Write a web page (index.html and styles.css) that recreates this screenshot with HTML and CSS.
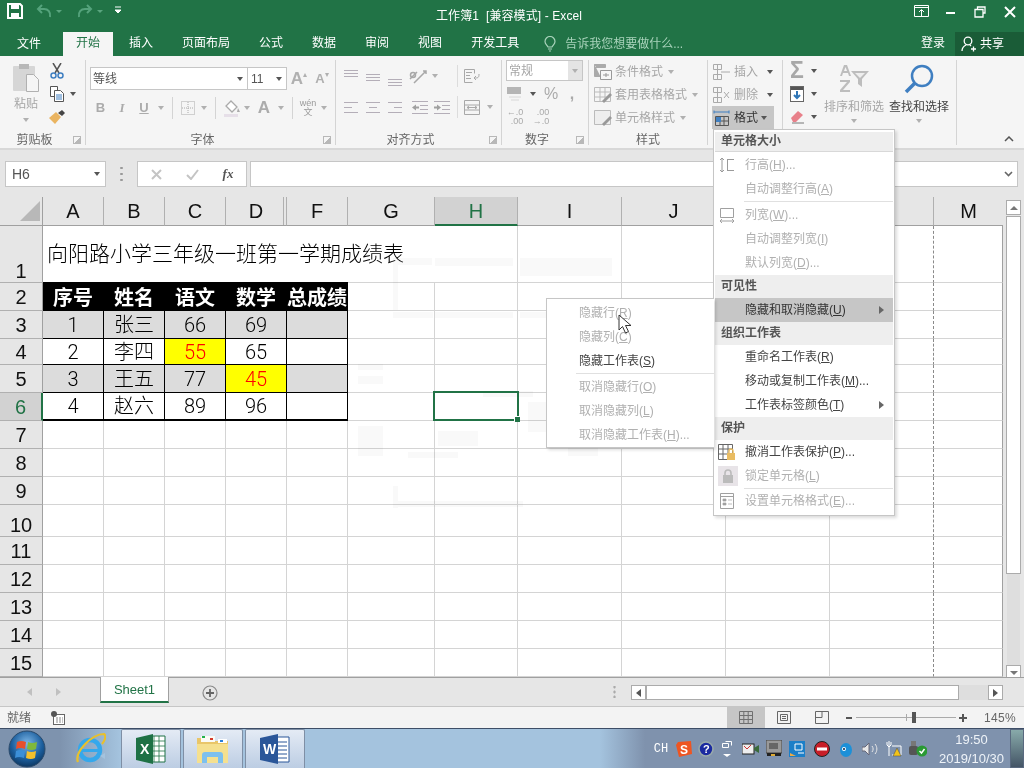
FILE: index.html
```html
<!DOCTYPE html>
<html lang="zh-CN">
<head>
<meta charset="utf-8">
<title>工作簿1 [兼容模式] - Excel</title>
<link rel="stylesheet" href="styles.css">
</head>
<body>
<div class="app">
  <header class="titlebar">
    <div class="qat">
      <svg class="q-save" width="16" height="16" viewBox="0 0 16 16"><path d="M1 1h12l2 2v12H1z" fill="none" stroke="#fff" stroke-width="2"/><rect x="4" y="1" width="8" height="5" fill="#fff"/><rect x="4" y="10" width="8" height="5" fill="#fff"/></svg>
      <svg class="q-undo" width="16" height="16" viewBox="0 0 16 16"><path d="M14 14c1-5-2-8-6-8H3M6 2 2 6l4 4" fill="none" stroke="#55a37c" stroke-width="2"/></svg><i class="caret-w dim"></i>
      <svg class="q-redo" width="16" height="16" viewBox="0 0 16 16"><path d="M2 14c-1-5 2-8 6-8h5M10 2l4 4-4 4" fill="none" stroke="#55a37c" stroke-width="2"/></svg><i class="caret-w dim"></i>
      <svg class="q-more" width="8" height="8" viewBox="0 0 8 8"><path d="M1 1h6M1 4h6l-3 3z" fill="#fff" stroke="#fff"/></svg>
    </div>
    <div class="doc-title">工作簿1&nbsp; [兼容模式] - Excel</div>
    <div class="winctl">
      <svg width="16" height="14" viewBox="0 0 16 14"><path d="M.5.5h14v11H.5zM.5 2.500h14" fill="none" stroke="#fff"/><path d="M7.500 11V5M5 7l2.500-2.500L10 7" fill="none" stroke="#fff"/></svg>
      <svg width="12" height="12" viewBox="0 0 12 12"><rect x="1" y="6" width="9" height="2" fill="#fff"/></svg>
      <svg width="12" height="12" viewBox="0 0 12 12"><path d="M3.500 3V1h7.500v6H9M1 3.500h8v7.500H1z" fill="none" stroke="#fff" stroke-width="1.300"/></svg>
      <svg width="12" height="12" viewBox="0 0 12 12"><path d="M1 1l10 10M11 1 1 11" stroke="#fff" stroke-width="2"/></svg>
    </div>
  </header>

  <nav class="tabs">
    <span class="tab first">文件</span>
    <span class="tab on">开始</span>
    <span class="tab">插入</span>
    <span class="tab">页面布局</span>
    <span class="tab">公式</span>
    <span class="tab">数据</span>
    <span class="tab">审阅</span>
    <span class="tab">视图</span>
    <span class="tab">开发工具</span>
    <span class="tell">
      <svg width="12" height="16" viewBox="0 0 12 16"><path d="M4 11C3 9 1 8 1 5.500a5 5 0 0 1 10 0C11 8 9 9 8 11zM4 13h4M5 15h2" fill="none" stroke="#a9d3bb" stroke-width="1.200"/></svg>
      告诉我您想要做什么...
    </span>
    <span class="login">登录</span>
    <span class="share">
      <svg width="16" height="16" viewBox="0 0 16 16"><circle cx="7" cy="5" r="3.800" fill="none" stroke="#fff" stroke-width="1.300"/><path d="M1 15c0-3 2-5 4-6M9 9l1 1M10 13h5M12.500 10.500v5" fill="none" stroke="#fff" stroke-width="1.300"/></svg>
      共享
    </span>
  </nav>

  <section class="ribbon">
    <div class="group g1">
      <div class="gbody">
        <div class="bigbtn paste">
          <svg width="28" height="30" viewBox="0 0 28 30"><rect x="1" y="3" width="22" height="25" rx="1" fill="#d6d6d6"/><rect x="7" y="1" width="10" height="5" fill="#b8b8b8"/><path d="M14.500 11.500h7l5 5v12h-12z" fill="#f5f5f5" stroke="#b0b0b0"/></svg>
          <span class="lbl dis">粘贴</span>
          <i class="caret sm"></i>
        </div>
        <div class="tools">
          <svg class="t-ic" width="16" height="16" viewBox="0 0 16 16"><path d="M4 0l6 10M12 0 6 10" stroke="#555" stroke-width="1.500"/><circle cx="4.500" cy="12.500" r="2.500" fill="none" stroke="#3f7fc1" stroke-width="1.500"/><circle cx="11.500" cy="12.500" r="2.500" fill="none" stroke="#3f7fc1" stroke-width="1.500"/></svg><span></span>
          <svg class="t-ic" width="16" height="16" viewBox="0 0 16 16"><path d="M1.500.5h7v10h-7z" fill="#fff" stroke="#555"/><path d="M5.500 4.500h6l3 3v8h-9z" fill="#fff" stroke="#555"/><path d="M7 9h6M7 11h6M7 13h6" stroke="#3f7fc1"/></svg><i class="caret dark"></i>
          <svg class="t-ic" width="18" height="16" viewBox="0 0 18 16"><path d="M1 9l7-6 5 5-6 7z" fill="#eab460"/><path d="M10 4l4-3 3 3-3 3z" fill="#444"/></svg><span></span>
        </div>
      </div>
      <div class="glabel"><span></span><span>剪贴板</span><span></span><i class="launch"></i></div>
    </div>
    <i class="vr"></i>

    <div class="group g2">
      <div class="gbody col">
        <div class="fontrow">
          <div class="combo fontbox"><span>等线</span><i class="caret dark"></i></div>
          <div class="combo sizebox"><span>11</span><i class="caret dark"></i></div>
          <span class="a-big">A<b>▴</b></span>
          <span class="a-small">A<b>▾</b></span>
        </div>
        <div class="fmtrow">
          <b class="gl serif">B</b><b class="gl serif it">I</b><b class="gl und">U</b><i class="caret"></i><i class="sep"></i>
          <svg width="14" height="14" viewBox="0 0 14 14"><path d="M.5.5h13v13H.500z" fill="none" stroke="#aaa" stroke-dasharray="1 1"/><path d="M7 1v12M1 7h12" stroke="#aaa" stroke-dasharray="1 1"/></svg><i class="caret"></i><i class="sep"></i>
          <svg width="18" height="18" viewBox="0 0 18 18"><path d="M8 2l6 6-5 5-6-6z" fill="#fff" stroke="#aaa" stroke-width="1.300"/><path d="M15 9l2 4h-3z" fill="#aaa"/><rect x="1" y="15" width="14" height="3" fill="#e6dfe8"/></svg><i class="caret"></i>
          <b class="gl big">A</b><i class="caret"></i><i class="sep"></i>
          <span class="wen"><small>wén</small><em>文</em></span><i class="caret"></i>
        </div>
      </div>
      <div class="glabel"><span></span><span>字体</span><span></span><i class="launch"></i></div>
    </div>
    <i class="vr"></i>

    <div class="group g3">
      <div class="gbody col">
        <div class="alrow one">
          <svg class="top" width="14" height="7" viewBox="0 0 14 7"><path d="M0 .5h14M0 3.500h14M0 6.500h14" stroke="#b4aeb8"/></svg>
          <svg class="mid" width="14" height="7" viewBox="0 0 14 7"><path d="M0 .5h14M0 3.500h14M0 6.500h14" stroke="#b4aeb8"/></svg>
          <svg class="bot" width="14" height="7" viewBox="0 0 14 7"><path d="M0 .5h14M0 3.500h14M0 6.500h14" stroke="#b4aeb8"/></svg>
          <svg width="18" height="16" viewBox="0 0 18 16"><path d="M1 11l7-7M5 15l12-12M14 3h3v3" fill="none" stroke="#a8a8a8" stroke-width="1.500"/><circle cx="4" cy="7" r="2.500" fill="none" stroke="#a8a8a8" stroke-width="1.500"/></svg>
          <i class="caret"></i><span></span><i class="vsep"></i>
          <svg width="16" height="16" viewBox="0 0 16 16"><path d="M.5 1.500h10v4M.5 1.500v13h8M2 4.500h6M2 7.500h4M2 10.500h5M15 6c0 4-1 4-5 4M12 8l-2 2 2 2" fill="none" stroke="#a8a8a8"/></svg>
        </div>
        <div class="alrow two">
          <svg width="14" height="11" viewBox="0 0 14 11"><path d="M0 .5h14M0 5.500h8M0 10.500h14" stroke="#b4aeb8"/></svg>
          <svg width="14" height="11" viewBox="0 0 14 11"><path d="M0 .5h14M3 5.500h8M0 10.500h14" stroke="#b4aeb8"/></svg>
          <svg width="14" height="11" viewBox="0 0 14 11"><path d="M0 .5h14M6 5.500h8M0 10.500h14" stroke="#b4aeb8"/></svg>
          <span></span>
          <svg width="16" height="13" viewBox="0 0 16 13"><path d="M0 .5h16M8 4.500h8M8 8.500h8M0 12.500h16" stroke="#b4aeb8"/><path d="M0 6.500l4-3v2h3v2H4v2z" fill="#a0a0a0"/></svg>
          <svg width="16" height="13" viewBox="0 0 16 13"><path d="M0 .5h16M8 4.500h8M8 8.500h8M0 12.500h16" stroke="#b4aeb8"/><path d="M7 6.500l-4-3v2H0v2h3v2z" fill="#a0a0a0"/></svg>
          <span></span><i class="vsep"></i>
          <svg width="16" height="15" viewBox="0 0 16 15"><path d="M.5.5h15v14H.5zM.5 5h15M.5 10h15" fill="none" stroke="#a8a8a8"/><path d="M3 7.500h10M3 7.500l2-1.500M3 7.500 5 9M13 7.500 11 6M13 7.500 11 9" fill="none" stroke="#a8a8a8"/></svg>
          <i class="caret"></i>
        </div>
      </div>
      <div class="glabel"><span></span><span>对齐方式</span><span></span><i class="launch"></i></div>
    </div>
    <i class="vr"></i>

    <div class="group g4">
      <div class="gbody col">
        <div class="numbox"><span>常规</span><b><i class="caret"></i></b></div>
        <div class="numrow">
          <svg width="16" height="14" viewBox="0 0 16 14"><rect width="14" height="7" fill="#b5b5b5"/><path d="M2 10h12M4 13h8" stroke="#d8d8d8"/></svg><i class="caret dark"></i><span class="pct">%</span><span class="comma">,</span>
        </div>
        <div class="decrow">
          <span class="dec"><small>←.0</small><small>.00</small></span><span class="dec"><small>.00</small><small>→.0</small></span>
        </div>
      </div>
      <div class="glabel"><span></span><span>数字</span><span></span><i class="launch"></i></div>
    </div>
    <i class="vr"></i>

    <div class="group g5">
      <div class="gbody col">
        <div class="lrow"><svg width="18" height="16" viewBox="0 0 18 16"><path d="M.5.5h11v3h-11zM.5.5v12h6" fill="#aaa" stroke="#aaa"/><path d="M6.500 6.500h11v9h-11zM9 11h6M12 9v4" fill="#f7f7f7" stroke="#999"/></svg><span class="dis">条件格式</span><i class="caret"></i></div>
        <div class="lrow"><svg width="18" height="16" viewBox="0 0 18 16"><path d="M.5.5h16v14H.5zM.5 5h16M.5 10h16M6 .5v14M11 .5v14" fill="none" stroke="#bbb"/><path d="M8 14 16 6l2 2-8 8z" fill="#999"/></svg><span class="dis">套用表格格式</span><i class="caret"></i></div>
        <div class="lrow"><svg width="18" height="16" viewBox="0 0 18 16"><path d="M.5.5h16v14H.5z" fill="#eee" stroke="#bbb"/><path d="M8 14 16 6l2 2-8 8z" fill="#999"/></svg><span class="dis">单元格样式</span><i class="caret"></i></div>
      </div>
      <div class="glabel nolaunch"><span></span><span>样式</span><span></span></div>
    </div>
    <i class="vr"></i>

    <div class="group g6">
      <div class="gbody col">
        <div class="lrow"><svg width="18" height="16" viewBox="0 0 18 16"><path d="M.5.5h8v5h-8zM.5 10.500h8v5h-8zM4.500.5v15M8 8h9" fill="none" stroke="#aaa"/></svg><span class="dis">插入</span><i class="caret dark auto"></i></div>
        <div class="lrow"><svg width="18" height="16" viewBox="0 0 18 16"><path d="M.5.5h8v5h-8zM.5 10.500h8v5h-8zM4.500.5v15M11 5l5 6M16 5l-5 6" fill="none" stroke="#aaa"/></svg><span class="dis">删除</span><i class="caret dark auto"></i></div>
        <div class="lrow active"><svg width="18" height="16" viewBox="0 0 18 16"><path d="M2.500 6.500h13v9h-13zM2.500 11h13M7 6.500v9M11 6.500v9" fill="none" stroke="#555"/><rect x="3" y="7" width="5" height="5" fill="#3f7fc1"/><path d="M1 2h15M1 .5v3M16 .5v3" fill="none" stroke="#3f7fc1"/></svg><span>格式</span><i class="caret dark"></i></div>
      </div>
    </div>
    <i class="vr"></i>

    <div class="group g7">
      <div class="gbody">
        <div class="tools edit">
          <span class="sigma">Σ</span><i class="caret dark"></i>
          <svg width="14" height="16" viewBox="0 0 14 16"><rect x=".5" y=".5" width="13" height="15" fill="#fff" stroke="#666"/><rect x="1" y="1" width="12" height="3" fill="#555"/><path d="M7 5v7M4 9l3 3 3-3" fill="none" stroke="#2e75b6" stroke-width="2"/></svg><i class="caret dark"></i>
          <svg width="15" height="14" viewBox="0 0 15 14"><path d="M1 8l7-7 5 4-7 7H3z" fill="#e8808a"/><path d="M2 13h12" stroke="#777"/></svg><i class="caret dark"></i>
        </div>
        <div class="bigbtn sort">
          <svg width="32" height="28" viewBox="0 0 32 28"><path d="M6 1h3l4 11h-2l-1-3H5l-1 3H2zM6 7h3L7.500 3zM2 16h10v2l-7 8h7v2H2v-2l7-8H2z" fill="#bdbdbd"/><path d="M13 7h18l-7 8v8l-4-3v-5z" fill="#bdbdbd"/><path d="M17 9h10l-5 5z" fill="#eee"/></svg>
          <span class="lbl dis">排序和筛选</span><i class="caret sm"></i>
        </div>
        <div class="bigbtn find">
          <svg width="30" height="30" viewBox="0 0 30 30"><circle cx="18" cy="12" r="10" fill="none" stroke="#3f7fc1" stroke-width="2.500"/><path d="M11 19 2 28" stroke="#3f7fc1" stroke-width="3.500"/></svg>
          <span class="lbl">查找和选择</span><i class="caret sm"></i>
        </div>
      </div>
    </div>
    <i class="vr"></i>
    <div class="collapse"><svg width="10" height="6" viewBox="0 0 10 6"><path d="M1 5l4-4 4 4" fill="none" stroke="#555" stroke-width="1.500"/></svg></div>
  </section>

  <section class="fbar">
    <div class="namebox"><span>H6</span><i class="caret dark"></i></div>
    <div class="grip"></div>
    <div class="fxbox">
      <svg width="11" height="11" viewBox="0 0 11 11"><path d="M1 1l9 9M10 1l-9 9" stroke="#c4c4c4" stroke-width="2"/></svg>
      <svg width="13" height="11" viewBox="0 0 13 11"><path d="M1 6l4 4 7-9" fill="none" stroke="#c4c4c4" stroke-width="2"/></svg>
      <em>fx</em>
    </div>
    <div class="finput"><svg width="9" height="6" viewBox="0 0 9 6"><path d="M1 1l3.500 3.500L8 1" fill="none" stroke="#666" stroke-width="1.600"/></svg></div>
  </section>

  <section class="sheet">
    <div class="gridwrap">
      <table class="grid">
        <colgroup><col class="c-h"><col class="c-a"><col class="c-a"><col class="c-a"><col class="c-a"><col class="c-a"><col class="c-g"><col class="c-hh"><col class="c-i"><col class="c-i"><col class="c-i"><col class="c-i"><col class="c-m"></colgroup>
        <tr class="hdr"><th class="corner"><i></i></th><th>A</th><th>B</th><th>C</th><th class="dbl">D</th><th>F</th><th>G</th><th class="sel">H</th><th>I</th><th>J</th><th></th><th></th><th class="noln">M</th></tr>
        <tr class="h57"><th class="rn low">1</th><td colspan="7" class="title">向阳路小学三年级一班第一学期成绩表</td><td></td><td></td><td></td><td></td><td></td></tr>
        <tr class="h28"><th class="rn">2</th><td class="k">序号</td><td class="k">姓名</td><td class="k">语文</td><td class="k">数学</td><td class="k">总成绩</td><td></td><td></td><td></td><td></td><td></td><td></td><td></td></tr>
        <tr class="h28"><th class="rn">3</th><td class="d g">1</td><td class="d g">张三</td><td class="d g">66</td><td class="d g">69</td><td class="d g"></td><td></td><td></td><td></td><td></td><td></td><td></td><td></td></tr>
        <tr class="h26"><th class="rn">4</th><td class="d">2</td><td class="d">李四</td><td class="d y">55</td><td class="d">65</td><td class="d"></td><td></td><td></td><td></td><td></td><td></td><td></td><td></td></tr>
        <tr class="h28"><th class="rn">5</th><td class="d g">3</td><td class="d g">王五</td><td class="d g">77</td><td class="d y">45</td><td class="d g"></td><td></td><td></td><td></td><td></td><td></td><td></td><td></td></tr>
        <tr class="h28"><th class="rn sel6">6</th><td class="d last">4</td><td class="d last">赵六</td><td class="d last">89</td><td class="d last">96</td><td class="d last"></td><td></td><td></td><td></td><td></td><td></td><td></td><td></td></tr>
        <tr class="h28"><th class="rn">7</th><td></td><td></td><td></td><td></td><td></td><td></td><td></td><td></td><td></td><td></td><td></td><td></td></tr>
        <tr class="h28"><th class="rn">8</th><td></td><td></td><td></td><td></td><td></td><td></td><td></td><td></td><td></td><td></td><td></td><td></td></tr>
        <tr class="h28"><th class="rn">9</th><td></td><td></td><td></td><td></td><td></td><td></td><td></td><td></td><td></td><td></td><td></td><td></td></tr>
        <tr class="h32"><th class="rn low">10</th><td></td><td></td><td></td><td></td><td></td><td></td><td></td><td></td><td></td><td></td><td></td><td></td></tr>
        <tr class="h28"><th class="rn">11</th><td></td><td></td><td></td><td></td><td></td><td></td><td></td><td></td><td></td><td></td><td></td><td></td></tr>
        <tr class="h28"><th class="rn">12</th><td></td><td></td><td></td><td></td><td></td><td></td><td></td><td></td><td></td><td></td><td></td><td></td></tr>
        <tr class="h28"><th class="rn">13</th><td></td><td></td><td></td><td></td><td></td><td></td><td></td><td></td><td></td><td></td><td></td><td></td></tr>
        <tr class="h28"><th class="rn">14</th><td></td><td></td><td></td><td></td><td></td><td></td><td></td><td></td><td></td><td></td><td></td><td></td></tr>
        <tr class="h28"><th class="rn">15</th><td></td><td></td><td></td><td></td><td></td><td></td><td></td><td></td><td></td><td></td><td></td><td></td></tr>
      </table>
      <svg class="ghost" width="370" height="290" viewBox="0 0 370 290"><g fill="#f9f9f9"><path d="M45 32h39v7H45zM45 32h5v52h-5zM87 32h78v8H87zM172 32h92v18h-92zM45 86h40v6H45zM87 86h78v6H87zM172 86h92v6h-92zM220 86h45v20h-45zM10 138h25v6H10zM10 150h25v8H10zM10 200h25v30H10zM60 226h50v6H60zM90 205h40v15H90zM135 165h50v6h-50zM180 176h30v30h-30zM220 205h30v25h-30zM45 275h130v6H45zM45 260h5v22h-5z"/></g></svg>
      <div class="activecell"><i></i></div>
    </div>
    <aside class="vscroll">
      <b class="sb-btn"><i class="tri up"></i></b>
      <b class="sb-thumb"></b>
      <span class="sb-track"></span>
      <b class="sb-btn"><i class="tri down"></i></b>
    </aside>
  </section>

  <section class="tabbar">
    <span class="nav"><i class="tri left"></i><i class="tri right"></i></span>
    <span class="sheettab">Sheet1</span>
    <svg class="addsheet" width="16" height="16" viewBox="0 0 16 16"><circle cx="8" cy="8" r="7" fill="none" stroke="#8a8a8a" stroke-width="1.200"/><path d="M4 8h8M8 4v8" stroke="#666" stroke-width="1.800"/></svg>
    <span class="hgrip"></span>
    <div class="hscroll">
      <b class="sb-btn"><i class="tri left dk"></i></b>
      <b class="h-thumb"></b>
      <span class="h-track"></span>
      <b class="sb-btn"><i class="tri right dk"></i></b>
    </div>
  </section>

  <footer class="status">
    <span class="ready">就绪</span>
    <svg class="macro" width="14" height="14" viewBox="0 0 14 14"><rect x="2.500" y="3.500" width="11" height="10" fill="#fff" stroke="#666"/><circle cx="3" cy="3" r="3" fill="#555"/><path d="M5 7h7M5 9h7M5 11h7" stroke="#888" stroke-dasharray="2 1"/></svg>
    <div class="views">
      <span class="view on"><svg width="14" height="13" viewBox="0 0 14 13"><path d="M.5.5h13v12H.500zM.5 4.500h13M.5 8.500h13M4.800.5v12M9.200.5v12" fill="none" stroke="#707070"/></svg></span>
      <span class="view"><svg width="14" height="13" viewBox="0 0 14 13"><path d="M.5.5h13v12H.500z" fill="none" stroke="#666"/><path d="M3.500 3.500h7v6h-7zM5 5.500h4M5 7.500h4" fill="none" stroke="#666"/></svg></span>
      <span class="view"><svg width="14" height="13" viewBox="0 0 14 13"><path d="M.5.5h13v12H.500zM7 .5v6M7 6.500H.500" fill="none" stroke="#666"/></svg></span>
    </div>
    <div class="zoom">
      <b class="zm"></b>
      <span class="track"><i class="tick"></i><i class="thumb"></i></span>
      <b class="zp"></b>
      <span class="pctz">145%</span>
    </div>
  </footer>

  <footer class="taskbar">
    <div class="startzone">
      <svg width="38" height="38" viewBox="0 0 38 38">
        <defs><radialGradient id="orb" cx=".5" cy=".35" r=".7"><stop offset="0" stop-color="#7fb8e8"/><stop offset=".6" stop-color="#1c5f9e"/><stop offset="1" stop-color="#0a2f55"/></radialGradient></defs>
        <circle cx="19" cy="19" r="18" fill="url(#orb)" stroke="#2b4a6b"/>
        <path d="M9 12q4-2 9 0l-1 7q-5-2-9 0z" fill="#e8502c"/><path d="M20 12q4 2 9 0l-1 7q-4 2-9 0z" fill="#80b83a"/><path d="M8 21q4-2 9 0l-1 7q-5-2-9 0z" fill="#3c8fd8"/><path d="M19 21q4 2 9 0l-1 7q-4 2-9 0z" fill="#f5c02c"/>
      </svg>
      <svg class="ie" width="32" height="34" viewBox="0 0 32 34"><circle cx="16" cy="18" r="10" fill="none" stroke="#35a8ec" stroke-width="4.500"/><path d="M7 17h19v3H7z" fill="#35a8ec"/><path d="M26 24l5-3v6z" fill="#a4c3de"/><path d="M4 30C0 20 18 2 30 2c3 2 0 8-2 10" fill="none" stroke="#e8c02c" stroke-width="2.200"/></svg>
    </div>
    <div class="tbtn">
      <svg width="30" height="32" viewBox="0 0 30 32"><path d="M15 3h14v26H15z" fill="#fff" stroke="#217346"/><path d="M18 3v26M23 3v26M15 8h14M15 13h14M15 18h14M15 23h14" stroke="#217346" stroke-width=".8"/><path d="M0 5l17-4v30L0 27z" fill="#1e7145"/><text x="4" y="21" class="ico-t">X</text></svg>
    </div>
    <div class="tbtn">
      <svg width="34" height="32" viewBox="0 0 34 32"><path d="M1 5h9l2 3h20v22H1z" fill="#e9c66a"/><rect x="5" y="3" width="14" height="6" fill="#fbfbf6"/><rect x="6" y="3" width="3" height="2" fill="#22b14c"/><rect x="14" y="5" width="3" height="2" fill="#d63a2a"/><rect x="22" y="6" width="9" height="4" fill="#fff"/><rect x="24" y="7" width="3" height="2" fill="#2a7fd8"/><path d="M1 11h31v19H1z" fill="#f5e08f"/><path d="M6 30v-8q0-3 3-3h15q3 0 3 3v8h-5v-6H11v6z" fill="#7dc0ee"/></svg>
    </div>
    <div class="tbtn">
      <svg width="30" height="32" viewBox="0 0 30 32"><path d="M15 4h14v25H15z" fill="#fff" stroke="#2a5699"/><path d="M18 9h9M18 13h9M18 17h9M18 21h9M18 25h9" stroke="#2a5699"/><path d="M0 5l18-4v30L0 27z" fill="#2a5699"/><text x="3" y="21" class="ico-t">W</text></svg>
    </div>
    <div class="tray">
      <span class="ch">CH</span>
      <svg width="16" height="16" viewBox="0 0 16 16"><path d="M2 1l13-1 1 13-13 3-3-12z" fill="#ee5522"/><text x="4" y="13" class="ico-s">S</text></svg>
      <svg width="16" height="16" viewBox="0 0 16 16"><circle cx="8" cy="8" r="7" fill="#1a2aa0" stroke="#9aa"  stroke-width="1.600"/><text x="5" y="12" class="ico-q">?</text></svg>
      <svg width="12" height="18" viewBox="0 0 12 18"><path d="M1.500 3.500h6v4h-6zM4.500 1.500h6v4" fill="none" stroke="#fff"/><path d="M2 14h8l-4 3z" fill="#fff"/></svg>
      <svg width="17" height="15" viewBox="0 0 17 15"><rect y="3" width="12" height="10" fill="#eee" stroke="#222"/><path d="M12 7l5-3v8l-5-3z" fill="#3a6a3a"/><path d="M2 5l3 3 4-4" stroke="#c33" fill="none"/></svg>
      <svg width="16" height="17" viewBox="0 0 16 17"><rect width="16" height="13" fill="#999" stroke="#444"/><rect x="3" y="3" width="9" height="6" fill="#666"/><rect x="1" y="13" width="14" height="3" fill="#222"/><rect x="5" y="14" width="4" height="2" fill="#da3"/></svg>
      <svg width="16" height="16" viewBox="0 0 16 16"><rect width="16" height="16" fill="#1c7fc8"/><path d="M1 12l6 3H1z" fill="#ea4"/><path d="M6 3h7v6H6z" fill="none" stroke="#fff"/><path d="M9 12h6" stroke="#fff"/></svg>
      <svg width="16" height="16" viewBox="0 0 16 16"><circle cx="8" cy="8" r="7.500" fill="#c81e28" stroke="#222"/><rect x="3" y="6.500" width="10" height="3" fill="#fff"/></svg>
      <svg width="14" height="16" viewBox="0 0 14 16"><ellipse cx="7" cy="9" rx="6" ry="7" fill="#1c90d8"/><circle cx="5" cy="8" r="2" fill="#fff"/><circle cx="5" cy="8" r="1" fill="#024"/></svg>
      <svg width="16" height="14" viewBox="0 0 16 14"><path d="M0 5h3l4-4v12l-4-4H0z" fill="#e8e8e8" stroke="#667"/><path d="M10 4c1.500 2 1.500 4 0 6M13 2c2.500 3 2.500 7 0 10" fill="none" stroke="#e8e8e8"/></svg>
      <svg width="16" height="17" viewBox="0 0 16 17"><path d="M3 1v7M1 2v3l2 2 2-2V2M3 8v8M6 6h9v9H6" fill="none" stroke="#fff"/><path d="M7 16l4-8 4 8z" fill="#f2c318" stroke="#444" stroke-width=".5"/></svg>
      <svg width="18" height="16" viewBox="0 0 18 16"><rect x="2" y="0" width="5" height="5" fill="#777"/><rect x="0" y="5" width="9" height="9" rx="2" fill="#555"/><circle cx="13" cy="10" r="5.500" fill="#2a9a34"/><path d="M10.500 10l2 2 3-4" fill="none" stroke="#fff" stroke-width="1.500"/></svg>
      <div class="clock"><span>19:50</span><span>2019/10/30</span></div>
      <span class="showdesk"></span>
    </div>
  </footer>
</div>

<div class="menu main">
  <div class="m-sec first">单元格大小</div>
  <div class="m-it dis"><svg width="16" height="16" viewBox="0 0 16 16"><path d="M3 1v14M1 3l2-2 2 2M1 13l2 2 2-2M8 2.500h7M8 13.500h7M8.500 2.500v11" fill="none" stroke="#9a9a9a"/></svg><span>行高(<u>H</u>)...</span></div>
  <div class="m-it dis nob"><span>自动调整行高(<u>A</u>)</span></div>
  <hr>
  <div class="m-it dis"><svg width="16" height="16" viewBox="0 0 16 16"><path d="M1.500 1.500h13v9h-13zM1 14h14M1 14l2-2M1 14l2 2M15 14l-2-2M15 14l-2 2" fill="none" stroke="#a0a0a0"/></svg><span>列宽(<u>W</u>)...</span></div>
  <div class="m-it dis nob"><span>自动调整列宽(<u>I</u>)</span></div>
  <div class="m-it dis nob"><span>默认列宽(<u>D</u>)...</span></div>
  <div class="m-sec">可见性</div>
  <div class="m-it hov nob"><span>隐藏和取消隐藏(<u>U</u>)</span><i class="tri right"></i></div>
  <div class="m-sec">组织工作表</div>
  <div class="m-it nob"><span>重命名工作表(<u>R</u>)</span></div>
  <div class="m-it nob"><span>移动或复制工作表(<u>M</u>)...</span></div>
  <div class="m-it nob"><span>工作表标签颜色(<u>T</u>)</span><i class="tri right"></i></div>
  <div class="m-sec">保护</div>
  <div class="m-it"><svg width="18" height="16" viewBox="0 0 18 16"><path d="M.5.5h14v15H.500zM.5 5h14M.5 10h14M5 .5v15M10 .5v15" fill="none" stroke="#666"/><rect x="9" y="9" width="8" height="7" fill="#e9bc62"/><path d="M11 9V7a2 2 0 0 1 4 0v2" fill="none" stroke="#e9bc62" stroke-width="1.400"/></svg><span>撤消工作表保护(<u>P</u>)...</span></div>
  <div class="m-it dis lock"><b><svg width="12" height="14" viewBox="0 0 12 14"><rect x="1" y="6" width="10" height="8" fill="#bbb"/><path d="M3 6V4a3 3 0 0 1 6 0v2" fill="none" stroke="#bbb" stroke-width="1.600"/></svg></b><span>锁定单元格(<u>L</u>)</span></div>
  <hr class="tight">
  <div class="m-it dis"><svg width="16" height="16" viewBox="0 0 16 16"><path d="M1.500.5h13v15h-13zM1.500 3.500h13" fill="none" stroke="#a0a0a0"/><path d="M4 6h3v2H4zM4 10h3v2H4zM9 7h4M9 11h4" fill="#a0a0a0" stroke="#a0a0a0" stroke-width=".7"/></svg><span>设置单元格格式(<u>E</u>)...</span></div>
</div>

<div class="menu sub">
  <div class="m-it dis nob"><span>隐藏行(<u>R</u>)</span></div>
  <div class="m-it dis nob"><span>隐藏列(<u>C</u>)</span></div>
  <div class="m-it nob"><span>隐藏工作表(<u>S</u>)</span></div>
  <hr>
  <div class="m-it dis nob"><span>取消隐藏行(<u>O</u>)</span></div>
  <div class="m-it dis nob"><span>取消隐藏列(<u>L</u>)</span></div>
  <div class="m-it dis nob"><span>取消隐藏工作表(<u>H</u>)...</span></div>
</div>

<svg class="pointer" width="14" height="20" viewBox="0 0 14 20"><path d="M1 1v15l3.500-3.500L7.500 19l3-1.500-3-6H13z" fill="#fff" stroke="#333"/></svg>
</body>
</html>
```

FILE: styles.css
```css
* { box-sizing: border-box; }
html, body { margin: 0; padding: 0; }
body {
  width: 1024px; height: 768px; overflow: hidden; position: relative;
  font: 12px/16px "Liberation Sans", "Noto Sans CJK SC", sans-serif;
  color: #444; background: #fff;
}
i, em { font-style: normal; }
svg { display: block; flex: none; }
.app { display: flex; flex-direction: column; height: 768px; }

/* title bar */
.titlebar { height: 32px; background: #217346; display: flex; align-items: center; color: #fff; flex: none; }
.qat { width: 436px; display: flex; align-items: center; height: 32px; padding: 0 0 10px 7px; }
.q-undo { margin-left: 13px; }
.q-redo { margin-left: 15px; }
.q-more { margin-left: 11px; margin-top: -2px; }
.caret-w { width: 0; height: 0; border: 3px solid transparent; border-top: 3px solid #fff; margin: 3px 0 0 4px; }
.caret-w.dim { border-top-color: #5aa57f; }
.doc-title { width: 148px; font-size: 12px; white-space: nowrap; letter-spacing: .1px; }
.winctl { margin-left: auto; display: grid; grid-template-columns: 29px 29px 30px 29px; width: 117px; padding-bottom: 8px; place-items: center; }

/* tabs */
.tabs { height: 24px; background: #217346; display: flex; gap: 3px; padding-left: 4px; color: #fff; flex: none; line-height: 23px; }
.tab { padding: 0 13px; white-space: nowrap; }
.tab.first { margin-right: 6px; line-height: 25px; }
.tab.on { background: #f5f5f5; color: #217346; }
.tell { margin-left: 9px; display: flex; align-items: center; gap: 9px; color: #a9d3bb; white-space: nowrap; }
.login { margin-left: auto; margin-right: 7px; }
.share { width: 69px; background: #1a5c37; display: flex; align-items: center; gap: 3px; padding-left: 6px; }

/* ribbon */
.ribbon { height: 94px; background: #f5f5f5; border-bottom: 2px solid #d8d8d8; display: flex; flex: none; }
.group { display: flex; flex-direction: column; flex: none; height: 92px; }
.g1 { width: 85px; } .g2 { width: 249px; } .g3 { width: 165px; } .g4 { width: 86px; }
.g5 { width: 118px; } .g6 { width: 74px; } .g7 { width: 173px; }
.vr { width: 1px; background: #d4d4d4; margin: 4px 0 3px; flex: none; }
.gbody { height: 75px; display: flex; flex: none; }
.gbody.col { flex-direction: column; }
.glabel { height: 17px; display: grid; grid-template-columns: 1fr auto 1fr 16px; align-items: center; color: #666; line-height: 16px; }
.glabel.nolaunch { grid-template-columns: 1fr auto 1fr; }
.launch { width: 8px; height: 8px; border: 1px solid #b8b8b8; justify-self: center; background: linear-gradient(135deg, transparent 55%, #b8b8b8 55%); }
.dis { color: #a6a6a6; }
.lbl { display: block; white-space: nowrap; margin-top: 1px; }
.caret { display: block; width: 0; height: 0; border: 3.5px solid transparent; border-top: 4px solid #b0b0b0; border-bottom: 0; flex: none; }
.caret.dark { border-top-color: #555; }
.caret.sm { margin-top: 6px; }

.bigbtn { display: flex; flex-direction: column; align-items: center; flex: none; }
.paste { width: 40px; margin-left: 6px; padding-top: 7px; }
.paste .lbl { margin-top: 3px; }
.tools { display: grid; grid-template-columns: 22px 10px; grid-auto-rows: 23px; place-items: center; padding-top: 3px; align-content: start; }

.fontrow { display: flex; align-items: center; margin: 11px 0 0 4px; height: 23px; }
.combo { height: 23px; background: #fff; border: 1px solid #c6c6c6; display: flex; align-items: center; justify-content: space-between; padding: 0 4px 0 2px; color: #555; }
.fontbox { width: 158px; }
.sizebox { width: 40px; margin-left: -1px; padding-left: 3px; }
.a-big, .a-small { color: #b0b0b0; font-weight: bold; width: 22px; text-align: center; font-size: 17px; line-height: 23px; }
.a-big { width: 24px; }
.a-small { font-size: 13px; }
.a-big b, .a-small b { font-size: 8px; vertical-align: top; line-height: 16px; font-weight: normal; }
.fmtrow { display: grid; grid-template-columns: 21px 22px 22px 12px 10px 22px 10px 12px 22px 8px 26px 8px 14px 18px 14px; height: 22px; margin: 7px 0 0 4px; place-items: center; }
.gl { color: #ababab; font-size: 13px; }
.serif { font-family: "Liberation Sans", sans-serif; }
.it { font-style: italic; font-family: "Liberation Serif", serif; }
.und { text-decoration: underline; }
.big { font-size: 17px; }
.sep { width: 1px; height: 22px; background: #d4d4d4; }
.wen { display: flex; flex-direction: column; align-items: center; color: #999; line-height: 9px; }
.wen small { font-size: 9px; }
.wen em { font-size: 9px; }

.alrow { display: grid; margin-left: 4px; place-items: center; height: 24px; }
.alrow.one { grid-template-columns: 22px 22px 22px 24px 10px 16px 2px 28px; margin-top: 8px; }
.alrow.two { grid-template-columns: 22px 22px 22px 3px 22px 22px 3px 2px 28px 8px; margin-top: 8px; height: 22px; }
.alrow .top { align-self: start; margin-top: 6px; }
.alrow .mid { align-self: start; margin-top: 10px; }
.alrow .bot { align-self: start; margin-top: 15px; }
.vsep { width: 1px; height: 22px; background: #dcdcdc; }

.numbox { width: 77px; height: 21px; margin: 4px 0 0 4px; border: 1px solid #c6c6c6; display: flex; align-items: center; background: #fff; color: #a6a6a6; padding-left: 2px; }
.numbox span { flex: 1; }
.numbox b { width: 14px; height: 19px; background: #e4e4e4; display: flex; align-items: center; justify-content: center; }
.numrow { display: grid; grid-template-columns: 18px 17px 20px 22px; height: 22px; margin: 2px 0 0 4px; place-items: center; color: #aaa; }
.pct { font-size: 16px; }
.comma { font-size: 16px; font-weight: bold; line-height: 12px; }
.decrow { display: grid; grid-template-columns: 18px 8px 18px; height: 22px; margin: 1px 0 0 4px; place-items: center; }
.decrow .dec:nth-child(2) { grid-column: 3; }
.dec { display: flex; flex-direction: column; color: #aaa; font-size: 9px; line-height: 9px; align-items: flex-end; white-space: nowrap; }
.dec small { font-size: 9px; }

.lrow { height: 23px; display: flex; align-items: center; flex: none; }
.g5 .gbody, .g6 .gbody { padding: 4px 0 0 4px; }
.lrow > svg { width: 18px; margin: 0 3px 0 1px; }
.lrow .caret { margin-left: 5px; }
.lrow .caret.auto { margin-left: auto; margin-right: 1px; }
.g6 .lrow { width: 62px; }
.lrow.active { background: #c6c6c6; color: #333; }
.lrow.active .caret { margin-left: 3px; }

.edit { grid-template-columns: 22px 12px; margin-left: 3px; }
.sigma { font-size: 23px; color: #a8a8a8; line-height: 23px; font-weight: bold; }
.sort, .find { width: 60px; padding-top: 8px; }
.sort { margin-left: 4px; }
.find { margin-left: 5px; }
.sort .lbl, .find .lbl { margin-top: 5px; }
.sort .caret.sm { margin-top: 4px; }
.find .caret.sm { margin-top: 4px; }
.sort .lbl { margin-top: 7px; }
.collapse { flex: 1; display: flex; justify-content: flex-end; align-items: flex-end; padding: 0 10px 6px 0; }

/* formula bar */
.fbar { height: 47px; background: #e6e6e6; display: flex; padding: 11px 6px 10px 5px; flex: none; }
.namebox { width: 101px; background: #fff; border: 1px solid #c6c6c6; display: flex; align-items: center; justify-content: space-between; padding: 0 5px 0 6px; font-size: 14px; color: #555; }
.grip { width: 31px; background: radial-gradient(circle, #999 1px, transparent 1.500px) center / 3px 6px repeat-y; margin: 5px 0; }
.fxbox { width: 110px; background: #fff; border: 1px solid #c6c6c6; display: grid; grid-template-columns: 36px 36px 36px; place-items: center; }
.fxbox em { font: italic bold 13px "Liberation Serif", serif; color: #555; }
.finput { flex: 1; margin-left: 3px; background: #fff; border: 1px solid #c6c6c6; display: flex; align-items: center; justify-content: flex-end; padding-right: 4px; }

/* sheet */
.sheet { height: 480px; display: flex; flex: none; background: #e6e6e6; }
.gridwrap { width: 1003px; position: relative; }
.grid { border-collapse: separate; border-spacing: 0; table-layout: fixed; width: 1003px; background: #fff; }
.c-h { width: 43px; } .c-a { width: 61px; } .c-g { width: 87px; } .c-hh { width: 83px; } .c-i { width: 104px; } .c-m { width: 69px; }
.grid th, .grid td { padding: 0; white-space: nowrap; overflow: hidden; }
.grid td { border-right: 1px solid #d4d4d4; border-bottom: 1px solid #d4d4d4; text-align: center; font-size: 20px; line-height: 20px; color: #000; font-family: Roboto, "Noto Sans CJK SC", sans-serif; font-weight: 300; }
.grid td:nth-last-child(2) { border-right: 1px dashed #8a8a8a; }
.grid td:last-child { border-right: 1px solid #a0a0a0; }
.hdr { height: 29px; }
.hdr th { background: #e6e6e6; border-bottom: 1px solid #a0a0a0; border-right: 1px solid #b0b0b0; font: 20px/20px "Liberation Sans", sans-serif; color: #111; }
.hdr th.noln { border-right: 0; }
.hdr th.dbl { box-shadow: inset -2px 0 0 #e6e6e6, inset -3px 0 0 #b0b0b0; }
.hdr th.sel { background: #d2d2d2; color: #217346; border-bottom: 2px solid #217346; }
.hdr th.corner { border-right: 1px solid #a0a0a0; }
.corner i { display: block; width: 0; height: 0; border-style: solid; border-width: 0 0 20px 20px; border-color: transparent transparent #b8b8b8 transparent; margin: 0 2px 0 auto; }
.grid th.rn { background: #e6e6e6; border-right: 1px solid #a0a0a0; border-bottom: 1px solid #b0b0b0; font: 20px/20px "Liberation Sans", sans-serif; color: #111; vertical-align: middle; }
.grid th.rn.low { vertical-align: bottom; padding-bottom: 1px; }
.grid th.rn.sel6 { background: #d2d2d2; color: #217346; border-right: 2px solid #217346; }
.h57 { height: 57px; } .h28 { height: 28px; } .h26 { height: 26px; } .h32 { height: 32px; }
.grid td.title { text-align: left; padding-left: 4px; font-size: 21px; line-height: 24px; border-right: 1px solid #d4d4d4; padding-bottom: 1px; }
.grid td.k { background: #000; color: #fff; font-weight: bold; border-color: #000; box-shadow: 0 -1px 0 #000; font-family: "Noto Sans CJK SC", sans-serif; }
.grid td.d { border-right-color: #000; border-right-style: solid; border-bottom-color: #000; }
.grid td.g { background: #dcdcdc; }
.grid td.y { background: #ff0; color: #f00; }
.grid td.last { border-bottom-width: 2px; }
.activecell { position: absolute; left: 433px; top: 194px; width: 86px; height: 30px; border: 2px solid #217346; }
.activecell i { position: absolute; right: -3px; bottom: -3px; width: 5px; height: 5px; box-sizing: content-box; background: #217346; border: 1px solid #fff; border-right-width: 0; border-bottom-width: 0; }
.ghost { position: absolute; left: 348px; top: 29px; pointer-events: none; mix-blend-mode: multiply; }

.vscroll { width: 21px; padding: 3px 3px 0; display: flex; flex-direction: column; }
.sb-btn { display: flex; width: 15px; height: 15px; background: #fff; border: 1px solid #ababab; align-items: center; justify-content: center; flex: none; }
.sb-thumb { display: block; height: 358px; background: #fff; border: 1px solid #ababab; flex: none; margin-top: 1px; }
.sb-track { flex: none; height: 91px; background: #dedede; margin-left: 1px; width: 13px; }
.tri { display: block; width: 0; height: 0; border: 4px solid transparent; flex: none; }
.tri.up { border-bottom: 4px solid #777; border-top: 0; }
.tri.down { border-top: 4px solid #777; border-bottom: 0; }
.tri.left { border-right: 5px solid #c0c0c0; border-left: 0; }
.tri.right { border-left: 5px solid #c0c0c0; border-right: 0; }
.tri.left.dk { border-right-color: #555; }
.tri.right.dk { border-left-color: #555; }

/* tab bar */
.tabbar { height: 29px; background: #e6e6e6; border-top: 1px solid #a0a0a0; display: flex; flex: none; }
.nav { width: 100px; display: flex; align-items: center; gap: 24px; padding-left: 27px; margin-top: -1px; }
.sheettab { width: 69px; height: 26px; margin-top: -1px; background: #fff; border: 1px solid #a0a0a0; border-top: 0; border-bottom: 2px solid #217346; color: #217346; font-size: 13px; line-height: 26px; text-align: center; }
.addsheet { margin: 7px 0 0 33px; }
.hgrip { width: 3px; height: 12px; margin: 8px 0 0 395px; background: radial-gradient(circle, #aaa 1px, transparent 1.500px) center / 3px 5px repeat-y; }
.hscroll { display: flex; width: 372px; margin: 7px 0 0 15px; height: 15px; background: #dedede; }
.h-thumb { display: block; width: 313px; background: #fff; border: 1px solid #ababab; flex: none; }
.h-track { flex: 1; }

/* status */
.status { height: 22px; background: #f3f3f3; border-top: 1px solid #c6c6c6; display: flex; align-items: center; flex: none; color: #666; }
.ready { margin-left: 7px; width: 24px; flex: none; white-space: nowrap; }
.macro { margin-left: 20px; }
.views { display: grid; grid-template-columns: 38px 38px 38px; margin-left: 662px; height: 21px; flex: none; }
.view { display: flex; align-items: center; justify-content: center; }
.view.on { background: #c6c6c6; }
.zoom { display: flex; align-items: center; flex: none; }
.zm { width: 6px; height: 2px; background: #555; margin-left: 5px; }
.track { display: block; width: 100px; height: 1px; background: #aaa; margin-left: 4px; position: relative; }
.tick { position: absolute; left: 50px; top: -3px; width: 1px; height: 7px; background: #aaa; }
.thumb { position: absolute; left: 56px; top: -5px; width: 4px; height: 11px; background: #555; }
.zp { display: block; width: 8px; height: 8px; margin-left: 3px; background: linear-gradient(#555, #555) center / 8px 2px no-repeat, linear-gradient(#555, #555) center / 2px 8px no-repeat; }
.pctz { margin-left: 17px; font-size: 12px; letter-spacing: .3px; color: #666; white-space: nowrap; }

/* taskbar */
.taskbar { height: 40px; display: flex; flex: none; border-top: 1px solid #3d4d66; background: linear-gradient(90deg, #7e93ae 0, #7e93ae 60px, #a4c3de 120px, #a4c3de 600px, #7f92ad 645px, #7f92ad 100%); }
.startzone { width: 121px; display: flex; align-items: center; padding-left: 8px; }
.ie { margin-left: 28px; }
.tbtn { width: 60px; margin-right: 2px; border: 1px solid #7f8fa5; border-bottom: 0; border-radius: 2px 2px 0 0; background: linear-gradient(#e4ebf5, #bccde3); display: flex; align-items: center; justify-content: center; flex: none; }
.ico-t { font: bold 14px "Liberation Sans", sans-serif; fill: #fff; }
.ico-s { font: bold 12px "Liberation Sans", sans-serif; fill: #fff; }
.ico-q { font: bold 11px "Liberation Sans", sans-serif; fill: #fff; }
.tray { margin-left: auto; width: 375px; display: grid; grid-template-columns: 24px 22px 21px 22px 24px 23px 24px 25px 24px 24px 24px 24px 80px 14px; place-items: center; color: #fff; }
.ch { font: 12px "Liberation Mono", monospace; }
.clock { display: flex; flex-direction: column; align-items: center; font-size: 13px; line-height: 19px; color: #eef3f8; white-space: nowrap; margin-left: 3px; }
.showdesk { justify-self: end; width: 14px; height: 39px; background: linear-gradient(#8aa, #456); border: 1px solid #59697f; }

/* menus */
.menu { position: absolute; background: #fff; border: 1px solid #c6c6c6; box-shadow: 2px 2px 3px rgba(0,0,0,.14); color: #444; }
.menu.main { left: 713px; top: 129px; width: 182px; height: 387px; padding: 2px 1px 0; }
.menu.sub { left: 546px; top: 298px; width: 168px; height: 150px; padding-top: 2px; border-right: 0; }
.m-sec { height: 23px; background: #eee; font-weight: bold; padding-left: 6px; line-height: 23px; color: #555; }
.m-sec.first { height: 20px; line-height: 18px; border-bottom: 1px solid #d8d8d8; margin-bottom: 1px; }
.m-it { height: 24px; display: flex; align-items: center; white-space: nowrap; padding-left: 3px; color: #444; }
.m-it > svg { width: 18px; flex: none; margin-right: 9px; }
.m-it.nob > span { margin-left: 27px; }
.sub .m-it.nob > span { margin-left: 29px; }
.m-it.dis { color: #b0b0b0; }
.m-it.hov { background: #c6c6c6; color: #333; }
.m-it .tri { margin-left: auto; margin-right: 9px; border-left-color: #666; }
.m-it.lock b { width: 20px; height: 20px; background: #e8e4e8; display: flex; align-items: center; justify-content: center; margin-right: 7px; }
.menu hr { border: 0; border-top: 1px solid #e0e0e0; margin: 0 0 1px 29px; height: 0; }
.menu hr.tight { margin-bottom: 0; }
.pointer { position: absolute; left: 618px; top: 314px; }
```
